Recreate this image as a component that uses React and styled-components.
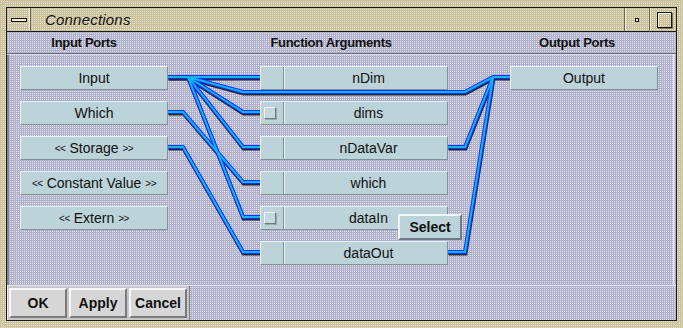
import React from 'react';
import styled, { createGlobalStyle } from 'styled-components';

const GlobalStyle = createGlobalStyle`
  html, body {
    margin: 0;
    padding: 0;
    background: #cdc5a4;
  }
  body {
    font-family: "Liberation Sans", Arial, sans-serif;
  }
`;

// 2x2 dither: one light pixel per tile, like the old X11 stipple
const dither = (base, dot) => `
  background-color: ${base};
  background-image:
    linear-gradient(${base} 1px, transparent 1px),
    linear-gradient(90deg, ${base} 1px, ${dot} 1px);
  background-size: 2px 2px;
`;

const Frame = styled.div`
  width: 683px;
  height: 328px;
  box-sizing: border-box;
  padding: 7px 6px;
  ${dither('#c9c09e', '#ece5cb')}
`;

const Window = styled.div`
  height: 100%;
  box-sizing: border-box;
  border: 1px solid #1a1a1a;
  display: flex;
  flex-direction: column;
  ${dither('#afafd2', '#e6e5da')}
`;

const TitleBar = styled.div`
  height: 23px;
  flex: none;
  display: flex;
  border-bottom: 1px solid #1a1a1a;
  ${dither('#c9c09e', '#ece5cb')}
`;

const MenuButton = styled.div`
  width: 23px;
  border-right: 1px solid #6c6652;
  box-shadow: inset -1px 0 0 #f2ecd6;
  display: flex;
  align-items: center;
  justify-content: center;
`;

const MenuBar = styled.div`
  width: 14px;
  height: 2px;
  border: 1px solid #111;
  background: #f2ecd6;
`;

const Title = styled.div`
  flex: 1;
  padding-left: 14px;
  font-style: italic;
  font-size: 15px;
  line-height: 23px;
  color: #111;
  letter-spacing: 0.2px;
`;

const WinButton = styled.div`
  width: ${p => p.$w}px;
  border-left: 1px solid #6c6652;
  box-shadow: inset 1px 0 0 #f2ecd6;
  display: flex;
  align-items: center;
  justify-content: center;
`;

const MinDot = styled.div`
  width: 2px;
  height: 2px;
  border: 1px solid #111;
  background: #f2ecd6;
  margin-top: 1px;
`;

const MaxBox = styled.div`
  width: 13px;
  height: 14px;
  border: 1px solid #111;
  box-shadow: inset 1px 1px 0 #f6f0da, 1px 1px 0 #7a7462;
  margin-left: 2px;
`;

const Header = styled.div`
  height: 21px;
  flex: none;
  display: grid;
  grid-template-columns: 152px 70px 202px 68px 154px;
  padding-left: 1px;
  border-bottom: 1px solid #6e6e80;
  box-shadow: 0 1px 0 #d8d8e6;
  margin-bottom: 1px;
`;

const HeaderLabel = styled.div`
  grid-column: ${p => p.$col};
  text-align: center;
  font-weight: bold;
  font-size: 13px;
  letter-spacing: -0.3px;
  line-height: 21px;
  color: #111;
`;

const Panel = styled.div`
  flex: 1;
  position: relative;
  border-left: 2px solid #85859a;
  border-right: 1px solid #e6e6f0;
  margin-right: 2px;
  padding: 11px 0 0 11px;
`;

const Wires = styled.svg`
  position: absolute;
  left: 0;
  top: 0;
  width: 100%;
  height: 100%;
  overflow: visible;
  pointer-events: none;
`;

const PortGrid = styled.div`
  position: relative;
  display: grid;
  grid-template-columns: 148px 92px 188px 62px 148px;
  align-items: start;
`;

const Column = styled.div`
  grid-column: ${p => p.$col};
  display: flex;
  flex-direction: column;
  gap: 11px;
`;

const bluePanel = `
  box-sizing: border-box;
  background: #bcd3da;
  border: 1px solid;
  border-color: #e9f2f3 #7e8f97 #7e8f97 #e9f2f3;
`;

const PortButton = styled.div`
  ${bluePanel}
  height: 24px;
  display: flex;
  align-items: center;
  justify-content: center;
  font-size: 14px;
  color: #111;
  white-space: nowrap;
`;

const Arrows = styled.span`
  font-size: 10px;
  letter-spacing: -0.5px;
  margin: 0 4px;
`;

const ArgButton = styled.div`
  ${bluePanel}
  height: 24px;
  display: flex;
`;

const ArgToggle = styled.div`
  width: 23px;
  border-right: 1px solid #7e8f97;
  box-shadow: 1px 0 0 #e9f2f3;
  display: flex;
  align-items: center;
  padding-left: 3px;
  box-sizing: border-box;
`;

const Check = styled.div`
  width: 12px;
  height: 12px;
  box-sizing: border-box;
  border: 1px solid;
  border-color: #eef5f6 #6d7c84 #6d7c84 #eef5f6;
  box-shadow: 1px 1px 0 #9aabb2;
  background: #c4d9df;
`;

const ArgLabel = styled.div`
  flex: 1;
  display: flex;
  align-items: center;
  justify-content: center;
  font-size: 14px;
  color: #111;
  padding-left: 6px;
`;

const SelectButton = styled.div`
  position: absolute;
  left: 389px;
  top: 159px;
  width: 64px;
  height: 26px;
  box-sizing: border-box;
  background: #bcd3da;
  border: 2px solid;
  border-color: #f1f7f8 #6d7c84 #6d7c84 #f1f7f8;
  display: flex;
  align-items: center;
  justify-content: center;
  font-weight: bold;
  font-size: 14px;
  color: #111;
  z-index: 2;
`;

const ButtonBar = styled.div`
  height: 35px;
  flex: none;
  box-sizing: border-box;
  border-top: 1px solid #e6e6f0;
  display: flex;
`;

const ButtonGroup = styled.div`
  width: 183px;
  box-sizing: border-box;
  background: #c8c8c8;
  border-right: 1px solid #777;
  border-left: 1px solid #ececec;
  padding: 2px 1px 1px 1px;
  display: flex;
  gap: 2px;
`;

const DialogButton = styled.div`
  width: 58px;
  height: 30px;
  box-sizing: border-box;
  background: #d6d6d6;
  border: 2px solid;
  border-color: #f8f8f8 #7a7a7a #7a7a7a #f8f8f8;
  display: flex;
  align-items: center;
  justify-content: center;
  font-weight: bold;
  font-size: 14px;
  color: #111;
`;

const inputs = [
  { label: 'Input' },
  { label: 'Which' },
  { label: 'Storage', wrap: true },
  { label: 'Constant Value', wrap: true },
  { label: 'Extern', wrap: true },
];

const args = [
  { label: 'nDim' },
  { label: 'dims', check: true },
  { label: 'nDataVar' },
  { label: 'which' },
  { label: 'dataIn', check: true },
  { label: 'dataOut' },
];

// wire routes in page coordinates
const routes = [
  [[168, 77], [260, 77]],
  [[168, 77], [188, 77], [243, 92], [465, 92], [493, 77], [510, 77]],
  [[188, 77], [243, 112], [260, 112]],
  [[188, 77], [243, 147], [260, 147]],
  [[188, 77], [243, 217], [260, 217]],
  [[168, 112], [183, 112], [243, 182], [260, 182]],
  [[168, 147], [183, 147], [243, 252], [260, 252]],
  [[448, 147], [465, 147], [493, 77]],
  [[448, 252], [465, 252], [493, 77]],
];

const pts = r => r.map(p => p.join(',')).join(' ');

const WireLayer = () => (
  <Wires>
    <g transform="translate(-9,-55)" fill="none" strokeLinejoin="miter">
      {routes.map((r, i) => (
        <polyline key={'s' + i} points={pts(r)} stroke="#262636" strokeWidth="4" transform="translate(0.5,1.5)" />
      ))}
      {routes.map((r, i) => (
        <polyline key={'b' + i} points={pts(r)} stroke="#1232ff" strokeWidth="4" />
      ))}
      {routes.map((r, i) => (
        <polyline key={'c' + i} points={pts(r)} stroke="#12b4ff" strokeWidth="2" />
      ))}
    </g>
  </Wires>
);

export default function App() {
  return (
    <>
      <GlobalStyle />
      <Frame>
        <Window>
          <TitleBar>
            <MenuButton><MenuBar /></MenuButton>
            <Title>Connections</Title>
            <WinButton $w={24}><MinDot /></WinButton>
            <WinButton $w={26}><MaxBox /></WinButton>
          </TitleBar>
          <Header>
            <HeaderLabel $col={1}>Input Ports</HeaderLabel>
            <HeaderLabel $col={3}>Function Arguments</HeaderLabel>
            <HeaderLabel $col={5}>Output Ports</HeaderLabel>
          </Header>
          <Panel>
            <WireLayer />
            <PortGrid>
              <Column $col={1}>
                {inputs.map(p => (
                  <PortButton key={p.label}>
                    {p.wrap && <Arrows>&lt;&lt;</Arrows>}
                    {p.label}
                    {p.wrap && <Arrows>&gt;&gt;</Arrows>}
                  </PortButton>
                ))}
              </Column>
              <Column $col={3}>
                {args.map(a => (
                  <ArgButton key={a.label}>
                    <ArgToggle>{a.check && <Check />}</ArgToggle>
                    <ArgLabel>{a.label}</ArgLabel>
                  </ArgButton>
                ))}
              </Column>
              <Column $col={5}>
                <PortButton>Output</PortButton>
              </Column>
            </PortGrid>
            <SelectButton>Select</SelectButton>
          </Panel>
          <ButtonBar>
            <ButtonGroup>
              <DialogButton>OK</DialogButton>
              <DialogButton>Apply</DialogButton>
              <DialogButton>Cancel</DialogButton>
            </ButtonGroup>
          </ButtonBar>
        </Window>
      </Frame>
    </>
  );
}
